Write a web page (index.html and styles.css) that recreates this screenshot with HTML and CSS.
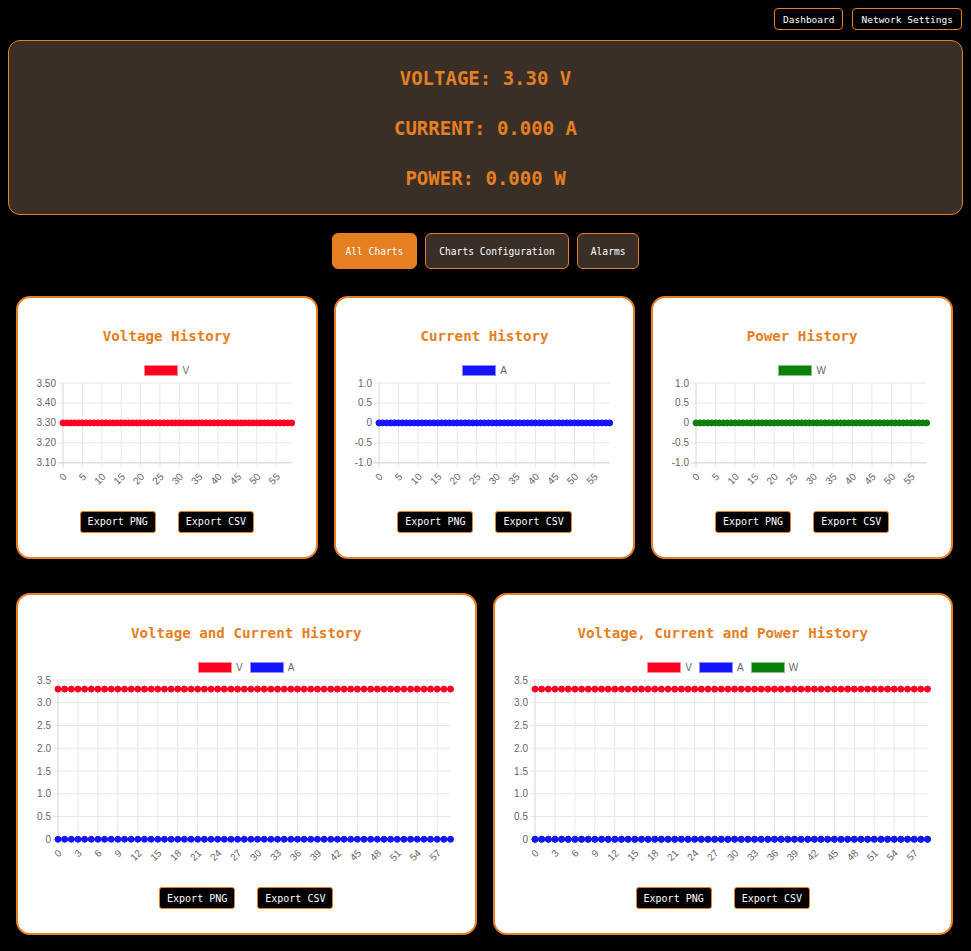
FILE: index.html
```html
<!DOCTYPE html>
<html lang="en">
<head>
    <meta charset="UTF-8">
    <meta name="viewport" content="width=device-width, initial-scale=1.0">
    <title>Power Monitor</title>
    <link rel="stylesheet" href="styles.css">
</head>
<body>
    <nav class="top-nav">
        <a class="nav-btn" href="#">Dashboard</a>
        <a class="nav-btn" href="#">Network Settings</a>
    </nav>

    <section class="readings">
        <div class="reading">VOLTAGE: <span id="voltage">3.30</span> V</div>
        <div class="reading">CURRENT: <span id="current">0.000</span> A</div>
        <div class="reading">POWER: <span id="power">0.000</span> W</div>
    </section>

    <div class="tabs">
        <button class="tab active">All Charts</button>
        <button class="tab">Charts Configuration</button>
        <button class="tab">Alarms</button>
    </div>

    <div class="charts">
        <div class="chart-row three">
            <div class="chart-card">
                <h3 class="chart-title">Voltage History</h3>
                <div class="chart">
                    <div class="chart-legend">
                        <span class="legend-item"><span class="legend-box volt"></span>V</span>
                    </div>
                    <svg class="chart-plot" id="voltage-chart"></svg>
                </div>
                <div class="chart-actions">
                    <button class="export-btn">Export PNG</button>
                    <button class="export-btn">Export CSV</button>
                </div>
            </div>

            <div class="chart-card">
                <h3 class="chart-title">Current History</h3>
                <div class="chart">
                    <div class="chart-legend">
                        <span class="legend-item"><span class="legend-box amp"></span>A</span>
                    </div>
                    <svg class="chart-plot" id="current-chart"></svg>
                </div>
                <div class="chart-actions">
                    <button class="export-btn">Export PNG</button>
                    <button class="export-btn">Export CSV</button>
                </div>
            </div>

            <div class="chart-card">
                <h3 class="chart-title">Power History</h3>
                <div class="chart">
                    <div class="chart-legend">
                        <span class="legend-item"><span class="legend-box watt"></span>W</span>
                    </div>
                    <svg class="chart-plot" id="power-chart"></svg>
                </div>
                <div class="chart-actions">
                    <button class="export-btn">Export PNG</button>
                    <button class="export-btn">Export CSV</button>
                </div>
            </div>
        </div>

        <div class="chart-row two">
            <div class="chart-card">
                <h3 class="chart-title">Voltage and Current History</h3>
                <div class="chart">
                    <div class="chart-legend">
                        <span class="legend-item"><span class="legend-box volt"></span>V</span>
                        <span class="legend-item"><span class="legend-box amp"></span>A</span>
                    </div>
                    <svg class="chart-plot" id="vi-chart"></svg>
                </div>
                <div class="chart-actions">
                    <button class="export-btn">Export PNG</button>
                    <button class="export-btn">Export CSV</button>
                </div>
            </div>

            <div class="chart-card">
                <h3 class="chart-title">Voltage, Current and Power History</h3>
                <div class="chart">
                    <div class="chart-legend">
                        <span class="legend-item"><span class="legend-box volt"></span>V</span>
                        <span class="legend-item"><span class="legend-box amp"></span>A</span>
                        <span class="legend-item"><span class="legend-box watt"></span>W</span>
                    </div>
                    <svg class="chart-plot" id="vip-chart"></svg>
                </div>
                <div class="chart-actions">
                    <button class="export-btn">Export PNG</button>
                    <button class="export-btn">Export CSV</button>
                </div>
            </div>
        </div>
    </div>

    <script>
        const NS = 'http://www.w3.org/2000/svg';
        const COLORS = { V: '#ff0022', A: '#1414ff', W: '#0a7f0a' };
        const POINTS = 60;

        // latest value of each series, repeated over 60 samples
        const history = { V: 3.3, A: 0, W: 0 };

        const charts = [
            { id: 'voltage-chart', series: ['V'], ticks: [3.5, 3.4, 3.3, 3.2, 3.1], digits: 2, left: 25, step: 5 },
            { id: 'current-chart', series: ['A'], ticks: [1, 0.5, 0, -0.5, -1], digits: 1, left: 23, step: 5 },
            { id: 'power-chart', series: ['W'], ticks: [1, 0.5, 0, -0.5, -1], digits: 1, left: 23, step: 5 },
            { id: 'vi-chart', series: ['V', 'A'], ticks: [3.5, 3, 2.5, 2, 1.5, 1, 0.5, 0], digits: 1, left: 20, step: 3 },
            { id: 'vip-chart', series: ['V', 'A', 'W'], ticks: [3.5, 3, 2.5, 2, 1.5, 1, 0.5, 0], digits: 1, left: 20, step: 3 }
        ];

        function el(name, attrs, parent) {
            const node = document.createElementNS(NS, name);
            for (const key in attrs) node.setAttribute(key, attrs[key]);
            parent.appendChild(node);
            return node;
        }

        function label(v, digits) {
            return v === 0 ? '0' : v.toFixed(digits);
        }

        function drawChart(cfg) {
            const svg = document.getElementById(cfg.id);
            const box = svg.getBoundingClientRect();
            const w = box.width, h = box.height;
            svg.setAttribute('viewBox', `0 0 ${w} ${h}`);

            const top = 7, bottom = h - 26;
            const left = cfg.left, right = w - 4;
            const max = cfg.ticks[0], min = cfg.ticks[cfg.ticks.length - 1];
            const xAt = i => left + i * (right - left) / (POINTS - 1);
            const yAt = v => top + (max - v) / (max - min) * (bottom - top);

            // horizontal grid + y labels
            cfg.ticks.forEach(t => {
                const y = yAt(t);
                el('line', { x1: left - 5, x2: right, y1: y, y2: y, class: 'grid' }, svg);
                el('text', { x: left - 7, y: y, dy: '0.35em', 'text-anchor': 'end', class: 'tick' }, svg).textContent = label(t, cfg.digits);
            });

            // vertical grid + rotated x labels
            for (let i = 0; i < POINTS; i += cfg.step) {
                const x = xAt(i);
                const lx = x + 4.5, ly = bottom + 14.5;
                el('line', { x1: x, x2: x, y1: top, y2: bottom + 5, class: i === 0 ? 'axis' : 'grid' }, svg);
                el('text', { x: lx, y: ly, 'text-anchor': 'end', transform: `rotate(-45 ${lx} ${ly})`, class: 'tick' }, svg).textContent = i;
            }
            el('line', { x1: left - 5, x2: right, y1: bottom, y2: bottom, class: 'axis' }, svg);

            // first dataset ends up on top, like chart.js
            cfg.series.slice().reverse().forEach(key => {
                const y = yAt(history[key]);
                const pts = [];
                for (let i = 0; i < POINTS; i++) pts.push(`${xAt(i)},${y}`);
                el('polyline', { points: pts.join(' '), fill: 'none', stroke: COLORS[key], 'stroke-width': 2 }, svg);
                for (let i = 0; i < POINTS; i++) {
                    el('circle', { cx: xAt(i), cy: y, r: 3, fill: COLORS[key], stroke: COLORS[key], 'stroke-width': 1 }, svg);
                }
            });
        }

        charts.forEach(drawChart);
    </script>
</body>
</html>
```

FILE: styles.css
```css
* {
    box-sizing: border-box;
}

body {
    margin: 8px;
    background-color: #000000;
    color: #ffffff;
    font-family: "DejaVu Sans Mono", "Liberation Mono", monospace;
}

/* top navigation */
.top-nav {
    display: flex;
    justify-content: flex-end;
    gap: 9px;
    height: 22px;
    margin-right: 1px;
}

.nav-btn {
    display: flex;
    align-items: center;
    height: 22px;
    padding: 0 8px;
    border: 1px solid #e67e22;
    border-radius: 4px;
    color: #ffffff;
    font-size: 9.5px;
    text-decoration: none;
}

/* live readings */
.readings {
    margin-top: 10px;
    padding: 12px 0 11px;
    background-color: #3a2f27;
    border: 1px solid #e67e22;
    border-radius: 12px;
    text-align: center;
}

.reading {
    line-height: 50px;
    font-size: 19px;
    font-weight: bold;
    color: #e67e22;
}

/* tabs */
.tabs {
    display: flex;
    justify-content: center;
    gap: 8px;
    margin-top: 18px;
}

.tab {
    height: 36px;
    padding: 0 13px;
    background-color: #3a2f27;
    border: 1px solid #e67e22;
    border-radius: 6px;
    color: #ffffff;
    font-family: inherit;
    font-size: 9.6px;
    cursor: pointer;
}

.tab.active {
    background-color: #e67e22;
}

/* charts */
.charts {
    display: flex;
    flex-direction: column;
    gap: 34px;
    margin-top: 27px;
    padding: 0 10px 0 8px;
}

.chart-row {
    display: grid;
    gap: 16px;
}

.chart-row.three {
    grid-template-columns: repeat(3, 1fr);
}

.chart-row.two {
    grid-template-columns: repeat(2, 1fr);
}

.chart-card {
    background-color: #ffffff;
    border: 2px solid #e67e22;
    border-radius: 14px;
    padding: 20px 20px 24px;
}

.chart-title {
    margin: 8px 0 14px;
    line-height: 20px;
    font-size: 14.2px;
    font-weight: bold;
    color: #e67e22;
    text-align: center;
}

.chart {
    display: flex;
    flex-direction: column;
    aspect-ratio: 2 / 1;
}

.chart-legend {
    display: flex;
    justify-content: center;
    gap: 7px;
    height: 16px;
    padding-top: 5px;
    font-family: "Liberation Sans", Arial, sans-serif;
    font-size: 10px;
    line-height: 11px;
    color: #666666;
}

.legend-item {
    display: flex;
    align-items: center;
    gap: 4px;
}

.legend-box {
    width: 34px;
    height: 11px;
    border: 1px solid;
}

.legend-box.volt {
    background-color: #ff0022;
    border-color: #ff8a96;
}

.legend-box.amp {
    background-color: #1414ff;
    border-color: #8c8cff;
}

.legend-box.watt {
    background-color: #0a7f0a;
    border-color: #86c486;
}

.chart-plot {
    display: block;
    flex: 1;
    width: 100%;
    min-height: 0;
    overflow: visible;
}

.chart-plot .grid {
    stroke: #e8e8e8;
    stroke-width: 1;
}

.chart-plot .axis {
    stroke: #d6d6d6;
    stroke-width: 1;
}

.chart-plot .tick {
    font-family: "Liberation Sans", Arial, sans-serif;
    font-size: 10px;
    fill: #666666;
}

.chart-actions {
    display: flex;
    justify-content: center;
    gap: 22px;
    margin-top: 22px;
}

.export-btn {
    height: 22px;
    padding: 0 7px;
    background-color: #000000;
    border: 1px solid #e67e22;
    border-radius: 3px;
    color: #ffffff;
    font-family: inherit;
    font-size: 10px;
    cursor: pointer;
}
```
